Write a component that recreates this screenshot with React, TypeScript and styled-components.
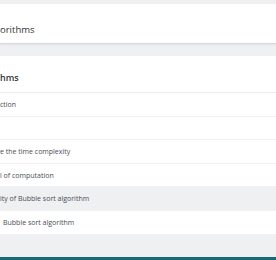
import React from 'react';
import styled, { createGlobalStyle } from 'styled-components';

const GlobalStyle = createGlobalStyle`
  html, body {
    margin: 0;
    padding: 0;
    background: #eff0f2;
    overflow: hidden;
  }
  * {
    box-sizing: border-box;
  }
`;

const Page = styled.div`
  width: 276px;
  height: 260px;
  display: flex;
  flex-direction: column;
  padding-top: 4px;
  font-family: 'Open Sans', 'Noto Sans', sans-serif;
  color: #3a3d40;
`;

const HeaderCard = styled.div`
  background: #ffffff;
  height: 40px;
  border-bottom: 1px solid #d6d8db;
  box-shadow: 0px 1px 2px rgba(0, 0, 0, 0.06);
  display: flex;
  align-items: flex-end;
  padding-bottom: 6px;
`;

const HeaderTitle = styled.h1`
  margin: 0;
  font-size: 9.5px;
  font-weight: 400;
  line-height: 14px;
  color: #2f3235;
`;

const Card = styled.div`
  margin-top: 12px;
  background: #ffffff;
  display: flex;
  flex-direction: column;
`;

const CardTitle = styled.h2`
  margin: 0;
  height: 37px;
  padding-top: 15px;
  font-size: 9px;
  font-weight: 600;
  line-height: 14px;
  color: #34373a;
  border-bottom: 1px solid #ececee;
`;

const Row = styled.div<{ $active?: boolean; $indent?: number }>`
  height: 23.6px;
  display: flex;
  align-items: center;
  padding-left: ${(p) => p.$indent || 0}px;
  font-size: 7px;
  color: #4a4e52;
  white-space: nowrap;
  background: ${(p) => (p.$active ? '#eff0f2' : '#ffffff')};
  border-bottom: 1px solid #f1f1f3;
`;

const Spacer = styled.div`
  flex: 1;
`;

const FooterBar = styled.div`
  height: 3px;
  background: #176a73;
`;

const lessons = [
  { text: 'ction' },
  { text: '' },
  { text: 'e the time complexity' },
  { text: 'l of computation' },
  { text: 'ity of Bubble sort algorithm', active: true },
  { text: 'Bubble sort algorithm', indent: 3 },
];

export default function App() {
  return (
    <>
      <GlobalStyle />
      <Page>
        <HeaderCard>
          <HeaderTitle>orithms</HeaderTitle>
        </HeaderCard>
        <Card>
          <CardTitle>hms</CardTitle>
          {lessons.map((lesson, i) => (
            <Row key={i} $active={lesson.active} $indent={lesson.indent}>
              {lesson.text}
            </Row>
          ))}
        </Card>
        <Spacer />
        <FooterBar />
      </Page>
    </>
  );
}
